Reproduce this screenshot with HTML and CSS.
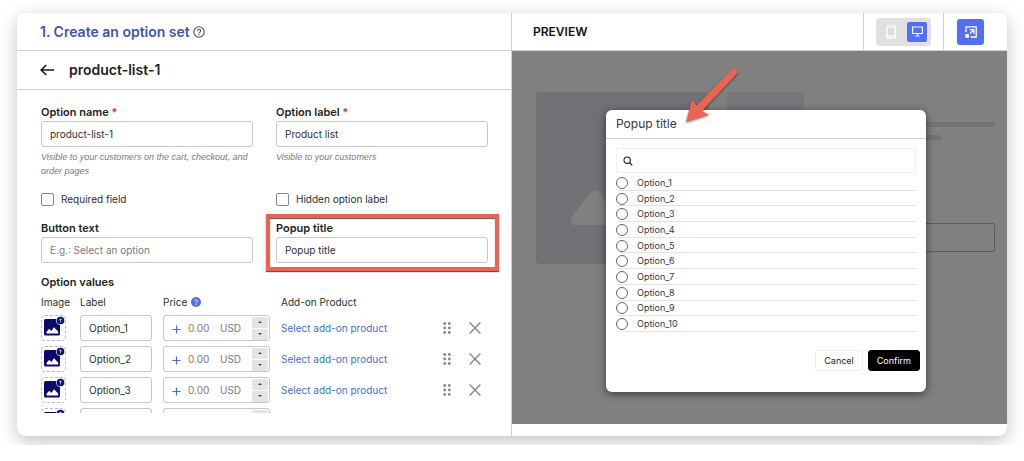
FILE: index.html
```html
<!DOCTYPE html>
<html lang="en">
<head>
<meta charset="utf-8">
<title>Create an option set</title>
<link rel="stylesheet" href="styles.css">
</head>
<body>
<svg class="defs" aria-hidden="true">
  <symbol id="picture" viewBox="1 1 23 24">
    <rect x="3" y="4" width="16" height="16.500" rx="1.500" fill="#0a0a6b"/>
    <path d="M5.500 18.500v-1.700l2.800-3 2 2.200 2.700-3.800 4.200 4.400v1.900z" fill="#fff"/>
    <circle cx="19.500" cy="5.500" r="4.100" fill="#0a0a6b" stroke="#fff" stroke-width=".7"/>
    <path d="M19.500 7.500V3.800M18 5.200l1.500-1.500L21 5.200" fill="none" stroke="#c9c9ea" stroke-width=".8"/>
  </symbol>
  <symbol id="dots" viewBox="0 0 8 12">
    <g fill="#85888c"><circle cx="1.700" cy="1.500" r="1.400"/><circle cx="6.300" cy="1.500" r="1.400"/><circle cx="1.700" cy="6" r="1.400"/><circle cx="6.300" cy="6" r="1.400"/><circle cx="1.700" cy="10.500" r="1.400"/><circle cx="6.300" cy="10.500" r="1.400"/></g>
  </symbol>
  <symbol id="cross" viewBox="0 0 12 12"><path d="M.6.600l10.800 10.800M11.400.600L.6 11.400" stroke="#85888c" stroke-width="1.400"/></symbol>
  <symbol id="plus" viewBox="0 0 10 10"><path d="M5 .5v9M.5 5h9" stroke="#4768ee" stroke-width="1.300"/></symbol>
</svg>
<div class="page">
<main class="card">
  <section class="editor">
    <header class="bar">
      <h1 class="step">1. Create an option set</h1>
      <svg class="help" viewBox="0 0 12 12"><circle cx="6" cy="6" r="5.200" fill="none" stroke="#4a4d52" stroke-width="1.100"/><path d="M4.400 4.900a1.600 1.600 0 1 1 2.400 1.300c-.5.300-.8.500-.8 1.100" fill="none" stroke="#4a4d52" stroke-width="1.100"/><circle cx="6" cy="8.800" r=".7" fill="#4a4d52"/></svg>
    </header>
    <div class="bar bar-title">
      <button class="back" type="button" aria-label="Back"><svg viewBox="0 0 14 12"><path d="M14 6H1.200M6.200 1L1.200 6l5 5" fill="none" stroke="#1a1a1a" stroke-width="1.600"/></svg></button>
      <h2 class="name">product-list-1</h2>
    </div>
    <form class="form">
      <div class="pair">
        <div class="field">
          <label class="label" for="oname">Option name <span class="req">*</span></label>
          <input class="input" id="oname" type="text" value="product-list-1">
          <p class="hint">Visible to your customers on the cart, checkout, and order pages</p>
        </div>
        <div class="field">
          <label class="label" for="olabel">Option label <span class="req">*</span></label>
          <input class="input" id="olabel" type="text" value="Product list">
          <p class="hint">Visible to your customers</p>
        </div>
      </div>
      <div class="pair checks">
        <label class="check"><input class="box" type="checkbox">Required field</label>
        <label class="check"><input class="box" type="checkbox">Hidden option label</label>
      </div>
      <div class="pair texts">
        <div class="field">
          <label class="label" for="btext">Button text</label>
          <input class="input" id="btext" type="text" placeholder="E.g.: Select an option">
        </div>
        <div class="field marked">
          <label class="label" for="ptitle">Popup title</label>
          <input class="input" id="ptitle" type="text" value="Popup title">
        </div>
      </div>
      <h3 class="label values-title">Option values</h3>
      <div class="values">
        <div class="row head">
          <span>Image</span><span>Label</span><span class="price-head">Price <svg class="q" viewBox="0 0 10 10"><circle cx="5" cy="5" r="5" fill="#5470f0"/><path d="M3.700 4a1.300 1.300 0 1 1 2 1.100c-.5.300-.7.500-.7 1" fill="none" stroke="#fff" stroke-width=".9"/><circle cx="5" cy="7.400" r=".6" fill="#fff"/></svg></span><span>Add-on Product</span>
        </div>
        <div class="row">
          <button class="image" type="button" aria-label="Image"><svg><use href="#picture"/></svg></button>
          <input class="input" aria-label="Label" type="text" value="Option_1">
          <div class="price"><svg class="plus"><use href="#plus"/></svg><input class="amount" aria-label="Price" type="text" placeholder="0.00"><span class="cur">USD</span><span class="spin"><button type="button" aria-label="Increase"></button><button class="down" type="button" aria-label="Decrease"></button></span></div>
          <a class="addon" href="#">Select add-on product</a>
          <button class="plain" type="button" aria-label="Move"><svg class="dots"><use href="#dots"/></svg></button>
          <button class="plain" type="button" aria-label="Remove"><svg class="cross"><use href="#cross"/></svg></button>
        </div>
        <div class="row">
          <button class="image" type="button" aria-label="Image"><svg><use href="#picture"/></svg></button>
          <input class="input" aria-label="Label" type="text" value="Option_2">
          <div class="price"><svg class="plus"><use href="#plus"/></svg><input class="amount" aria-label="Price" type="text" placeholder="0.00"><span class="cur">USD</span><span class="spin"><button type="button" aria-label="Increase"></button><button class="down" type="button" aria-label="Decrease"></button></span></div>
          <a class="addon" href="#">Select add-on product</a>
          <button class="plain" type="button" aria-label="Move"><svg class="dots"><use href="#dots"/></svg></button>
          <button class="plain" type="button" aria-label="Remove"><svg class="cross"><use href="#cross"/></svg></button>
        </div>
        <div class="row">
          <button class="image" type="button" aria-label="Image"><svg><use href="#picture"/></svg></button>
          <input class="input" aria-label="Label" type="text" value="Option_3">
          <div class="price"><svg class="plus"><use href="#plus"/></svg><input class="amount" aria-label="Price" type="text" placeholder="0.00"><span class="cur">USD</span><span class="spin"><button type="button" aria-label="Increase"></button><button class="down" type="button" aria-label="Decrease"></button></span></div>
          <a class="addon" href="#">Select add-on product</a>
          <button class="plain" type="button" aria-label="Move"><svg class="dots"><use href="#dots"/></svg></button>
          <button class="plain" type="button" aria-label="Remove"><svg class="cross"><use href="#cross"/></svg></button>
        </div>
        <div class="row">
          <button class="image" type="button" aria-label="Image"><svg><use href="#picture"/></svg></button>
          <input class="input" aria-label="Label" type="text">
          <div class="price"><span class="spin"><button type="button" aria-label="Increase"></button><button class="down" type="button" aria-label="Decrease"></button></span></div>
        </div>
      </div>
    </form>
  </section>
  <section class="preview">
    <header class="bar bar-preview">
      <h2 class="preview-title">PREVIEW</h2>
      <div class="tools">
        <div class="toggle">
          <button class="device" type="button" aria-label="Mobile"><svg viewBox="0 0 10 14"><rect width="10" height="14" rx="1.500" fill="#f8f8f8"/><rect x="1.800" y="3" width="6.400" height="7.200" fill="#dcdcdc"/><path d="M2 1.500h6M2.500 12h1.500M6 12h1.500" stroke="#dcdcdc" stroke-width=".7"/></svg></button>
          <button class="device on" type="button" aria-label="Desktop"><svg class="screen" viewBox="0 0 11 11"><path d="M.6 1h9.800v6.500H.6zM5.500 7.500V10M3.500 10h4" fill="none" stroke="#fff" stroke-width="1.100"/></svg></button>
        </div>
      </div>
      <div class="tools last">
        <button class="expand" type="button" aria-label="Expand"><svg viewBox="0 0 12 12"><path d="M1 6V.8h10.200V11H5.500" fill="none" stroke="#fff" stroke-width="1.300"/><path d="M4.500 3.700h4.300V8M8.600 3.900L5 7.500" fill="none" stroke="#fff" stroke-width="1.300"/><rect x=".2" y="8" width="3.800" height="3.800" rx=".8" fill="#fff"/></svg></button>
      </div>
    </header>
    <div class="stage">
      <div class="skeleton">
        <div class="sk-image"><svg viewBox="0 0 104 54"><path d="M4 53q-4-1-3-7L20 21q5-5 10 0l6 9L62 5q6-7 12 0l28 40q3 7-4 8z" fill="#808080"/></svg></div>
        <div class="sk-info">
          <div class="sk-head"></div>
          <div class="sk-line"></div>
          <div class="sk-line short"></div>
          <div class="sk-box"></div>
        </div>
      </div>
      <div class="modal" role="dialog" aria-labelledby="mtitle">
        <h3 class="modal-title" id="mtitle">Popup title</h3>
        <div class="modal-body">
          <label class="search"><svg viewBox="0 0 10 10"><circle cx="4.200" cy="4.200" r="3.200" fill="none" stroke="#222" stroke-width="1.100"/><path d="M6.500 6.500L9.300 9.300" stroke="#222" stroke-width="1.200"/></svg><input type="text" aria-label="Search"></label>
          <div class="options">
            <label class="opt"><input type="radio" name="o"><span>Option_1</span></label>
            <label class="opt"><input type="radio" name="o"><span>Option_2</span></label>
            <label class="opt"><input type="radio" name="o"><span>Option_3</span></label>
            <label class="opt"><input type="radio" name="o"><span>Option_4</span></label>
            <label class="opt"><input type="radio" name="o"><span>Option_5</span></label>
            <label class="opt"><input type="radio" name="o"><span>Option_6</span></label>
            <label class="opt"><input type="radio" name="o"><span>Option_7</span></label>
            <label class="opt"><input type="radio" name="o"><span>Option_8</span></label>
            <label class="opt"><input type="radio" name="o"><span>Option_9</span></label>
            <label class="opt"><input type="radio" name="o"><span>Option_10</span></label>
          </div>
        </div>
        <div class="actions"><button class="btn" type="button">Cancel</button><button class="btn dark" type="button">Confirm</button></div>
        <svg class="arrow" viewBox="0 0 54 56"><path d="M1 55L7 32.500l4.500 6.300L46.800 2.600a3 3 0 0 1 4.800 4.300L17 44l7 3.800z" fill="#ec6451"/></svg>
      </div>
    </div>
  </section>
</main>
</div>
</body>
</html>
```
FILE: styles.css
```css
* { box-sizing: border-box; }
body { margin: 0; background: #fff; color: #2b2e33; font: 10px/14px Inter, "Liberation Sans", sans-serif; }
h1, h2, h3, p { margin: 0; }
button, input { font: inherit; color: inherit; margin: 0; padding: 0; }
svg { display: block; flex: none; }
.defs { position: absolute; width: 0; height: 0; }

.page { padding: 13px 17px 9px; overflow: hidden; }
.card { display: grid; grid-template-columns: 1fr 1fr; background: #fff; border-radius: 9px; box-shadow: 0 5px 18px rgba(0, 0, 0, .24); }
.editor { min-width: 0; border-right: 1px solid #d0d0d0; }
.preview { min-width: 0; padding-bottom: 12px; }

.bar { display: flex; align-items: center; height: 38px; padding-left: 23px; border-bottom: 1px solid #d0d0d0; }
.step { font-size: 14px; line-height: 18px; font-weight: 600; color: #4353b5; }
.help { width: 12px; height: 12px; margin-left: 3px; }
.bar-title { height: 39px; }
.back { border: 0; background: none; }
.back svg { width: 14px; height: 12px; }
.name { margin-left: 15px; font-size: 14px; line-height: 18px; font-weight: 600; color: #222; }

.form { padding: 15px 23px 0 24px; }
.pair { display: grid; grid-template-columns: 1fr 1fr; gap: 23px; }
.field { min-width: 0; }
.label { display: block; height: 16px; font-size: 11px; line-height: 14px; font-weight: 600; color: #222; }
.req { color: #d8321f; }
.input { display: block; width: 100%; min-width: 0; height: 26px; padding: 0 8px; border: 1px solid #c4c7ca; border-radius: 3px; background: #fff; }
.input::placeholder, .amount::placeholder { color: #777b80; opacity: 1; }
.hint { padding-top: 3px; font-family: "Liberation Sans", sans-serif; font-size: 9px; font-style: italic; color: #777b80; }
.checks { margin-top: 14px; }
.check { display: flex; align-items: center; gap: 7px; height: 14px; }
.box { appearance: none; width: 13px; height: 13px; border: 1px solid #85888c; border-radius: 2px; background: #fff; }
.texts { margin-top: 15px; }
.marked { position: relative; }
.marked::after { content: ""; position: absolute; inset: -7px -11px -8px -10px; border: 4px solid #ec6451; box-shadow: 0 1px 1px #555, inset 0 1px 1px #555; pointer-events: none; }
.values-title { margin-top: 12px; }
.values { height: 122px; overflow: hidden; }
.row { display: grid; grid-template-columns: 28px 72px 107px 1fr 20px 26px; column-gap: 11px; align-items: center; height: 26px; margin-bottom: 5px; }
.row > :nth-child(5) { justify-self: end; }
.head { height: 14px; margin: 4px 0 6px; }
.price-head { display: flex; align-items: center; gap: 4px; }
.q { width: 10px; height: 10px; }
.image { width: 25px; height: 26px; border: 1px dashed #b9bcc0; border-radius: 4px; background: #fff; }
.image svg { width: 23px; height: 24px; }
.price { display: flex; align-items: center; height: 26px; padding: 0 1px 0 8px; border: 1px solid #c4c7ca; border-radius: 3px; color: #777b80; }
.plus { width: 9px; height: 9px; margin-top: 2px; }
.amount { width: 32px; min-width: 0; margin-left: 7px; border: 0; background: none; }
.cur { flex: 1; }
.spin { display: grid; gap: 1px; margin-left: auto; }
.spin button { display: grid; place-items: center; width: 16px; height: 11px; border: 0; border-radius: 2px; background: #e3e4e6; }
.spin button::after { content: ""; border: 2px solid transparent; border-top: 0; border-bottom-color: #444; }
.spin .down::after { transform: rotate(180deg); }
.addon { color: #3f70cf; text-decoration: none; white-space: nowrap; }
.plain { display: grid; place-items: center; border: 0; background: none; }
.dots { width: 8px; height: 12px; }
.cross { width: 12px; height: 12px; }

.bar-preview { padding-left: 21px; }
.preview-title { flex: 1; font-size: 12px; line-height: 16px; font-weight: 600; color: #111; }
.tools { display: flex; align-items: center; align-self: stretch; width: 80px; padding-left: 12px; border-left: 1px solid #d0d0d0; }
.tools.last { width: 64px; padding-left: 13px; }
.toggle { display: flex; align-items: center; gap: 6px; padding: 4px 4px 4px 5px; border-radius: 3px; background: #e0e0e0; }
.device { display: grid; place-items: center; width: 20px; height: 20px; border: 0; border-radius: 2px; background: none; }
.device.on { background: #5470f0; }
.device svg { width: 10px; height: 14px; }
.device .screen { width: 11px; height: 11px; }
.expand { display: grid; place-items: center; width: 27px; height: 26px; border: 0; border-radius: 3px; background: #5470f0; }
.expand svg { width: 12px; height: 12px; }

.stage { position: relative; padding: 41px 12px 160px 24px; background: #808080; }
.skeleton { display: grid; grid-template-columns: 172px 1fr; gap: 19px; }
.sk-image { display: grid; align-content: end; justify-content: center; height: 172px; padding-bottom: 38px; border-radius: 4px; background: #707174; }
.sk-image svg { width: 104px; height: 54px; }
.sk-head { width: 77px; height: 18px; margin-bottom: 12px; border-radius: 2px; background: #76777a; }
.sk-line { height: 5px; margin-bottom: 8px; border-radius: 2px; background: #727375; }
.sk-line.short { width: 80%; }
.sk-box { height: 29px; margin-top: 83px; border: 1px solid #5c5c5c; border-radius: 2px; }

.modal { position: absolute; top: 59px; right: 81px; width: 320px; padding-bottom: 21px; border-radius: 6px; background: #fff; box-shadow: 0 2px 8px rgba(0, 0, 0, .55); color: #303744; }
.modal-title { padding: 5px 10px; border-bottom: 1px solid #d0d0d0; font-size: 12px; line-height: 18px; font-weight: 400; }
.modal-body { padding: 9px 10px 0; }
.search { display: flex; align-items: center; gap: 6px; height: 25px; padding-left: 6px; border: 1px solid #f1f1f1; }
.search svg { width: 10px; height: 10px; }
.search input { flex: 1; border: 0; outline: 0; background: none; }
.options { display: grid; grid-auto-rows: 1fr; height: 157px; margin-top: 2px; font-size: 9px; line-height: 12px; }
.opt { display: flex; align-items: center; gap: 9px; background: linear-gradient(#e2e3e5, #e2e3e5) 2px 100% / 100% 1px no-repeat; }
.opt input { appearance: none; width: 12px; height: 12px; border: 1px solid #666; border-radius: 50%; background: #fff; }
.actions { display: flex; justify-content: flex-end; gap: 5px; padding: 18px 6px 0; }
.btn { height: 21px; padding: 0 8px; border: 1px solid #eee; border-radius: 3px; background: #fff; color: #222; font-size: 9px; line-height: 12px; }
.btn.dark { border-color: #000; background: #000; color: #fff; }
.arrow { position: absolute; top: -43px; left: 79px; width: 54px; height: 56px; filter: drop-shadow(0 1px 1px rgba(0, 0, 0, .5)); }
```
